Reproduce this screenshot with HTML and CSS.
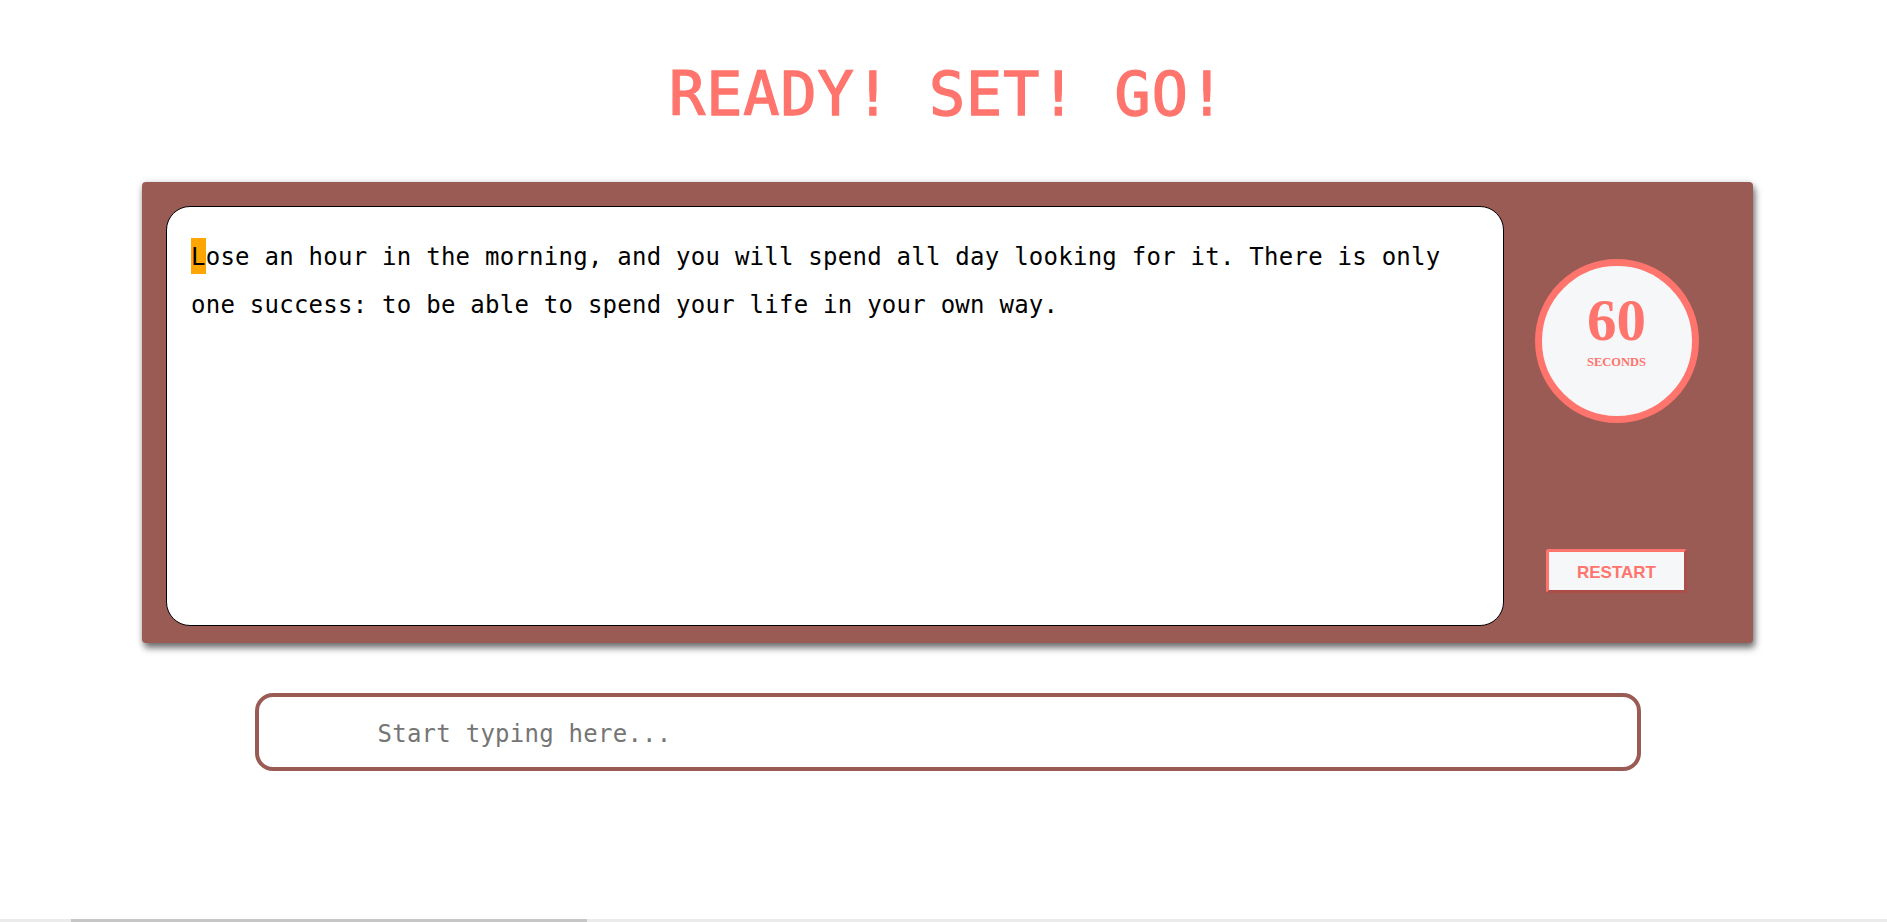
FILE: index.html
```html
<!DOCTYPE html>
<html lang="en">
<head>
<meta charset="utf-8">
<title>Ready! Set! Go!</title>
<link rel="stylesheet" href="styles.css">
</head>
<body>
<main class="page">
  <h1 class="title">READY! SET! GO!</h1>
  <section class="card">
    <div class="quote-box">
      <p class="quote"><span class="cursor">L</span>ose an hour in the morning, and you will spend all day looking for it. There is only one success: to be able to spend your life in your own way.</p>
    </div>
    <aside class="side">
      <div class="timer">
        <div class="timer-num">60</div>
        <div class="timer-label">SECONDS</div>
      </div>
      <button class="restart" type="button">RESTART</button>
    </aside>
  </section>
  <div class="input-row">
    <input class="type-input" type="text" placeholder="Start typing here...">
  </div>
</main>
<div class="hscroll"><div class="hscroll-thumb"></div></div>
</body>
</html>
```
FILE: styles.css
```css
html, body {
  margin: 0;
  padding: 0;
  background: #ffffff;
}

body {
  font-family: "DejaVu Sans Mono", "Liberation Mono", monospace;
  overflow: hidden;
  height: 922px;
}

.page {
  padding: 59px 134px 0 142px;
  display: flex;
  flex-direction: column;
}

.title {
  margin: 0;
  height: 70px;
  line-height: 70px;
  font-size: 60px;
  font-weight: normal;
  -webkit-text-stroke: 1.4px #ff746c;
  letter-spacing: 1px;
  text-align: center;
  color: #ff746c;
  font-family: "DejaVu Sans Mono", monospace;
}

.card {
  margin-top: 53px;
  display: flex;
  background: #9b5b55;
  border-radius: 4px;
  padding: 24px 24px 17px 24px;
  box-shadow: 2px 5px 7px rgba(0, 0, 0, 0.55), 0 0 6px rgba(0, 0, 0, 0.12);
}

.quote-box {
  flex: 1;
  height: 420px;
  box-sizing: border-box;
  background: #ffffff;
  border: 1px solid #000000;
  border-radius: 24px;
  padding: 26px 24px 24px 24px;
}

.quote {
  margin: 0;
  font-size: 24px;
  line-height: 48px;
  letter-spacing: 0.25px;
  color: #000000;
}

.cursor {
  background: #ffa500;
  box-shadow: 0 -5px 0 #ffa500, 0 3px 0 #ffa500;
}

.side {
  width: 225px;
  flex: none;
  display: flex;
  flex-direction: column;
  align-items: center;
  padding: 53px 0 33px;
  box-sizing: border-box;
  height: 420px;
}

.timer {
  width: 164px;
  height: 164px;
  box-sizing: border-box;
  border: 7px solid #ff746c;
  border-radius: 50%;
  background: #f6f7f9;
  display: flex;
  flex-direction: column;
  align-items: center;
  padding-top: 25px;
  color: #ff746c;
  font-family: "Liberation Serif", "Times New Roman", serif;
  font-weight: bold;
}

.timer-num {
  font-size: 59px;
  line-height: 59px;
}

.timer-label {
  margin-top: 6px;
  font-size: 12.5px;
  line-height: 12.5px;
}

.restart {
  margin-top: auto;
  width: 141px;
  height: 44px;
  box-sizing: border-box;
  background: #f6f7f9;
  border: 3px outset #ff746c;
  border-radius: 3px;
  color: #ff746c;
  font-family: "Liberation Sans", Arial, sans-serif;
  font-weight: bold;
  font-size: 17px;
  padding: 3px 0 0;
}

.input-row {
  margin-top: 50px;
  display: flex;
  justify-content: center;
}

.type-input {
  width: 1386px;
  height: 78px;
  box-sizing: border-box;
  border: 4px solid #9b5b55;
  border-radius: 18px;
  padding: 3px 20px 0 119px;
  font-family: "DejaVu Sans Mono", monospace;
  font-size: 24px;
  letter-spacing: 0.25px;
  color: #000000;
  background: #ffffff;
  outline: none;
}

.type-input::placeholder {
  color: #757575;
}

.hscroll {
  position: fixed;
  left: 0;
  right: 0;
  bottom: 0;
  height: 3px;
  background: #ebebeb;
}

.hscroll-thumb {
  position: absolute;
  left: 71px;
  width: 516px;
  top: 0;
  bottom: 0;
  background: #c6c6c6;
}
```
